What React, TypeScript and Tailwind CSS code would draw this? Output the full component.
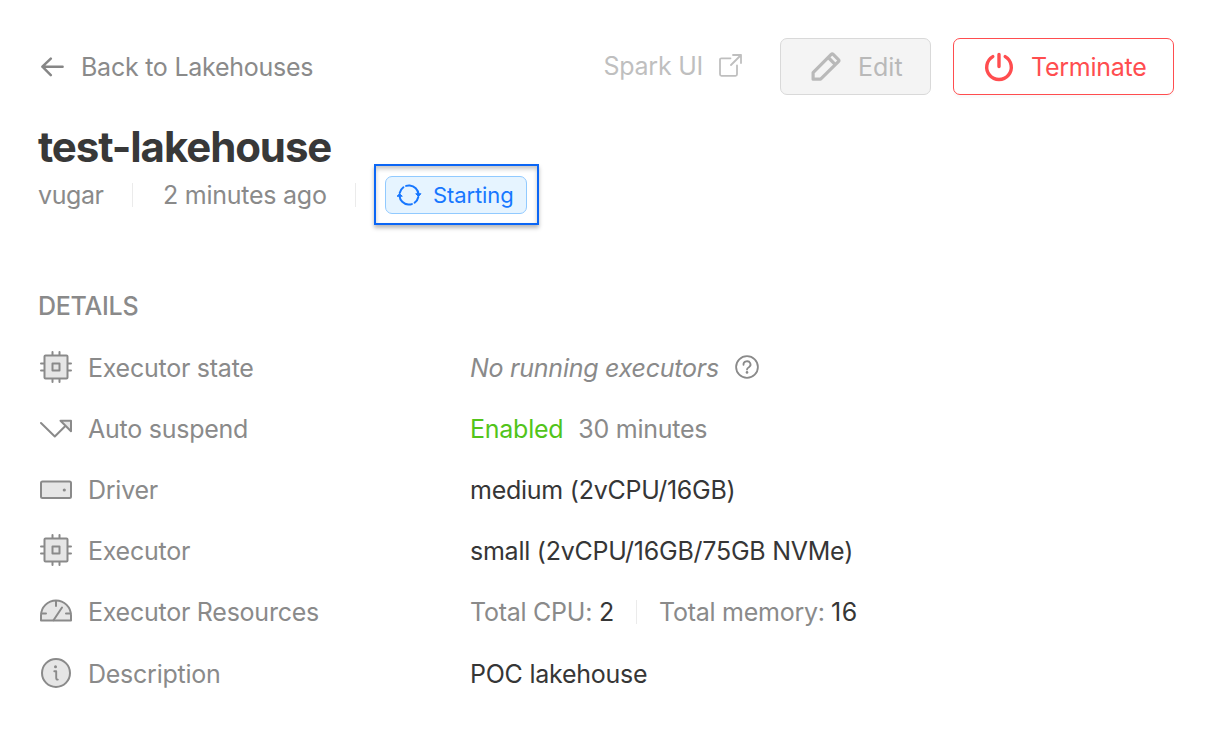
import type { ReactNode } from "react";

function Svg({ w, h, sw = 2, className = "", children }: { w: number; h: number; sw?: number; className?: string; children: ReactNode }) {
  return (
    <svg
      width={w}
      height={h}
      viewBox={`0 0 ${w} ${h}`}
      fill="none"
      stroke="currentColor"
      strokeWidth={sw}
      strokeLinecap="round"
      strokeLinejoin="round"
      className={`shrink-0 ${className}`}
    >
      {children}
    </svg>
  );
}

const ArrowLeftIcon = () => (
  <Svg w={24} h={20} sw={2.5} className="text-[#868686]">
    <path d="M22.6 9.700H2.400M10.800 1.600L2.400 9.700l8.400 8.400" />
  </Svg>
);

const ExternalIcon = () => (
  <Svg w={24} h={24} sw={1.8}>
    <path d="M11.500 4.300H2.500Q1 4.300 1 5.800v14.500q0 1.500 1.500 1.500h14q1.500 0 1.500-1.500v-8.800M14 1h8v8M22 1L12 11" />
  </Svg>
);

const PencilIcon = () => (
  <Svg w={32} h={32} sw={3.2}>
    <path d="M3.100 28.200v-6.500L21.200 3.400q1-1 2 0l5.200 5.200q1 1 0 2L10.600 28.200zM18.300 6.500l6.800 6.800" />
  </Svg>
);

const PowerIcon = () => (
  <Svg w={30} h={30} sw={3.4}>
    <path d="M15 2.500v12M8.800 4.600A12.300 12.300 0 1 0 21.200 4.600" />
  </Svg>
);

const SyncIcon = () => (
  <Svg w={26} h={24} sw={2}>
    <path d="M3.700 10A9.500 9.500 0 0 1 22.500 11.500M22.300 14A9.500 9.500 0 0 1 3.500 12.500" strokeDasharray="7 3 17 0" />
    <path d="M1.300 13L3.500 10.800L6 13zM20 11L22.500 13.400L24.700 11z" fill="currentColor" strokeWidth={1} />
  </Svg>
);

const CpuIcon = () => (
  <Svg w={32} h={32}>
    <path d="M12.500 1v4M19.500 1v4M12.500 27v4M19.500 27v4M1 12.500h4M1 19.500h4M27 12.500h4M27 19.500h4" />
    <rect x="4.500" y="4.500" width="23" height="23" rx="1" fill="#e6e6e6" />
    <rect x="12.500" y="12.500" width="7" height="7" />
  </Svg>
);

const SuspendIcon = () => (
  <Svg w={32} h={32}>
    <path d="M1 11L14.800 24.500L25.600 13.700" />
    <path d="M20.500 8.800H31v10.500z" fill="#e6e6e6" />
  </Svg>
);

const DriveIcon = () => (
  <Svg w={32} h={32}>
    <rect x="1" y="8.500" width="30" height="16.500" rx="1.500" fill="#e6e6e6" />
    <circle cx="24.300" cy="17" r="1.600" fill="currentColor" stroke="none" />
  </Svg>
);

const GaugeIcon = () => (
  <Svg w={32} h={32}>
    <path d="M1 25.500V20.500a15 15 0 0 1 30 0v5z" fill="#e6e6e6" />
    <path d="M16 6v5M1.500 18.500H6M26 18.500h4.500M13.500 25.200L22 12.500" />
  </Svg>
);

const InfoIcon = () => (
  <Svg w={32} h={32}>
    <circle cx="16" cy="16" r="14" fill="#e6e6e6" />
    <path d="M14.300 14.200h1.900v6.800q0 1.600 1.600 1.600" strokeWidth="1.900" />
    <circle cx="15.500" cy="9.800" r="1.500" fill="currentColor" stroke="none" />
  </Svg>
);

const HelpIcon = () => (
  <Svg w={24} h={24} sw={1.8}>
    <circle cx="12" cy="12" r="10.900" />
    <path d="M8.500 9.800a3.500 3.200 0 1 1 5.400 2.400Q12 13.300 12 14.500" />
    <circle cx="12" cy="17.400" r="1.300" fill="currentColor" stroke="none" />
  </Svg>
);

function Row({ icon, label, children }: { icon: ReactNode; label: ReactNode; children: ReactNode }) {
  return (
    <div className="flex h-[61.200px] items-center">
      <div className="flex w-[432px] items-center gap-4 pl-0.5">
        <span className="mb-0.5">{icon}</span>
        {label}
      </div>
      <div className="flex items-center">{children}</div>
    </div>
  );
}

export default function App() {
  return (
    <main className="h-[734px] w-[1212px] overflow-hidden whitespace-nowrap bg-white px-[38px] pt-[38px] font-['Inter',sans-serif] text-[25px] leading-8 tracking-[-0.250px] text-[#8a8a8a]">
      <header className="flex h-[57px] items-center">
        <a className="flex items-center gap-[17px] pl-0.5">
          <ArrowLeftIcon />
          <span>Back to Lakehouses</span>
        </a>
        <div className="ml-auto flex items-center">
          <a className="mr-[37px] flex items-center gap-4 text-[#bfbfbf]">
            <span className="mb-px">Spark UI</span>
            <span className="mb-0.5">
              <ExternalIcon />
            </span>
          </a>
          <button className="mr-[22px] flex h-[57px] w-[151px] items-center gap-4 rounded-[7px] border border-[#d9d9d9] bg-[#f4f4f4] pl-[29px] text-[#b9b9b9]">
            <PencilIcon />
            <span className="tracking-normal">Edit</span>
          </button>
          <button className="flex h-[57px] w-[221px] items-center gap-[17px] rounded-[7px] border border-[#ff4d4f] bg-white pl-[30px] text-[#ff4d4f] shadow-[0_3px_1px_rgba(0,0,0,0.02)]">
            <PowerIcon />
            <span>Terminate</span>
          </button>
        </div>
      </header>

      <h1 className="mt-[26px] h-[53px] text-[42px] font-bold leading-[52px] tracking-[-1.100px] text-[#383838]">test-lakehouse</h1>

      <div className="-mt-[10px] flex h-[61px] items-center">
        <span className="w-[94px] tracking-[-0.400px]">vugar</span>
        <span className="mr-[30px] h-6 w-px bg-[#ebebeb]" />
        <span className="w-[192px]">2 minutes ago</span>
        <span className="h-6 w-px bg-[#ebebeb]" />
        <div className="ml-[18px] flex h-[61px] w-[165px] items-center border-2 border-[#0b66f5] pl-[9px] shadow-[0_3px_4px_rgba(0,0,0,0.28),inset_0_3px_4px_rgba(0,0,0,0.22)]">
          <div className="flex h-[38px] w-[142px] items-center gap-[11px] rounded-[7px] border border-[#91caff] bg-[#e6f4ff] pl-2.5 text-[22px] text-[#1777ff]">
            <SyncIcon />
            <span className="tracking-[-0.100px]">Starting</span>
          </div>
        </div>
      </div>

      <h2 className="mt-[65px] font-medium">DETAILS</h2>

      <section className="mt-[15px]">
        <Row icon={<CpuIcon />} label={<span>Executor state</span>}>
          <span className="mr-4 italic">No running executors</span>
          <span className="mb-0.5">
            <HelpIcon />
          </span>
        </Row>
        <Row icon={<SuspendIcon />} label={<span>Auto suspend</span>}>
          <span className="mr-[15px] text-[#52c41a]">Enabled</span>
          <span>30 minutes</span>
        </Row>
        <Row icon={<DriveIcon />} label={<span>Driver</span>}>
          <span className="text-[#363636]">medium (2vCPU/16GB)</span>
        </Row>
        <Row icon={<CpuIcon />} label={<span>Executor</span>}>
          <span className="text-[#363636]">small (2vCPU/16GB/75GB NVMe)</span>
        </Row>
        <Row icon={<GaugeIcon />} label={<span>Executor Resources</span>}>
          <span className="w-[129px]">Total CPU:</span>
          <span className="w-[37px] text-[#363636]">2</span>
          <span className="mr-[22px] h-6 w-px bg-[#ebebeb]" />
          <span className="w-[172px]">Total memory:</span>
          <span className="tracking-[0.500px] text-[#363636]">16</span>
        </Row>
        <Row icon={<InfoIcon />} label={<span>Description</span>}>
          <span className="text-[#363636]">POC lakehouse</span>
        </Row>
      </section>
    </main>
  );
}
